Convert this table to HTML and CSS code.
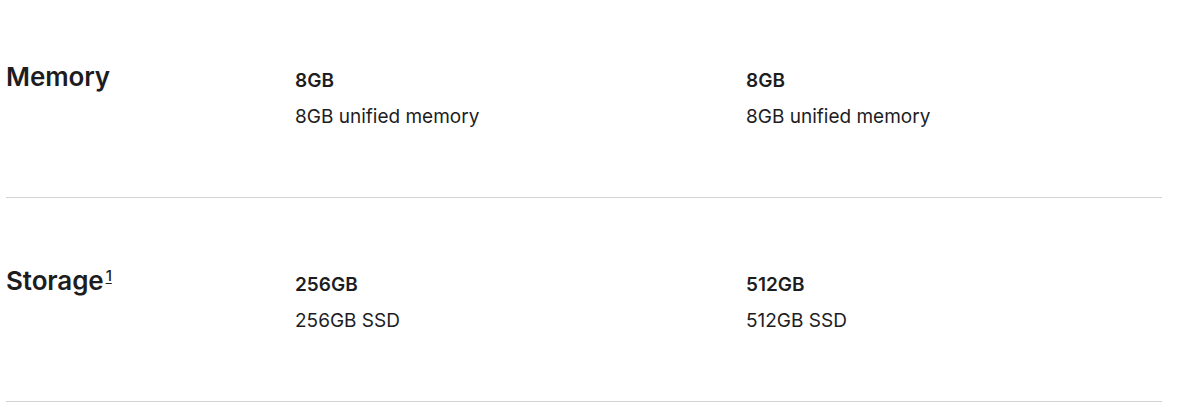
FILE: index.html
```html
<!DOCTYPE html>
<html lang="en">
<head>
<meta charset="utf-8">
<title>Compare specs</title>
<link rel="stylesheet" href="styles.css">
</head>
<body>
<div class="specs">
  <section class="row">
    <h3 class="label">Memory</h3>
    <div class="cell">
      <p class="value">8GB</p>
      <p class="detail">8GB unified memory</p>
    </div>
    <div class="cell">
      <p class="value">8GB</p>
      <p class="detail">8GB unified memory</p>
    </div>
  </section>
  <section class="row">
    <h3 class="label">Storage<sup class="fn">1</sup></h3>
    <div class="cell">
      <p class="value">256GB</p>
      <p class="detail">256GB SSD</p>
    </div>
    <div class="cell">
      <p class="value">512GB</p>
      <p class="detail">512GB SSD</p>
    </div>
  </section>
</div>
</body>
</html>
```

FILE: styles.css
```css
html, body {
  margin: 0;
  padding: 0;
  background: #ffffff;
}
body {
  font-family: Inter, "Liberation Sans", sans-serif;
  color: #1d1d1f;
  overflow: hidden;
}
.specs {
  margin: -6px 38px 0 6px;
}
.row {
  display: grid;
  grid-template-columns: 289px 451px 1fr;
  padding: 67px 0 67px;
  border-bottom: 1px solid #d2d2d7;
}
.label {
  margin: 0;
  font-size: 26px;
  line-height: 32px;
  font-weight: 600;
  letter-spacing: -0.1px;
}
.fn {
  font-size: 15px;
  font-weight: 500;
  text-decoration: underline;
  text-underline-offset: 2px;
  vertical-align: 0;
  position: relative;
  top: -9px;
  margin-left: 2px;
}
.cell {
  padding-top: 8px;
}
.value {
  margin: 0;
  font-size: 19px;
  line-height: 23px;
  font-weight: 600;
}
.detail {
  margin: 11px 0 0;
  font-size: 19px;
  line-height: 27px;
  font-weight: 400;
}
```
